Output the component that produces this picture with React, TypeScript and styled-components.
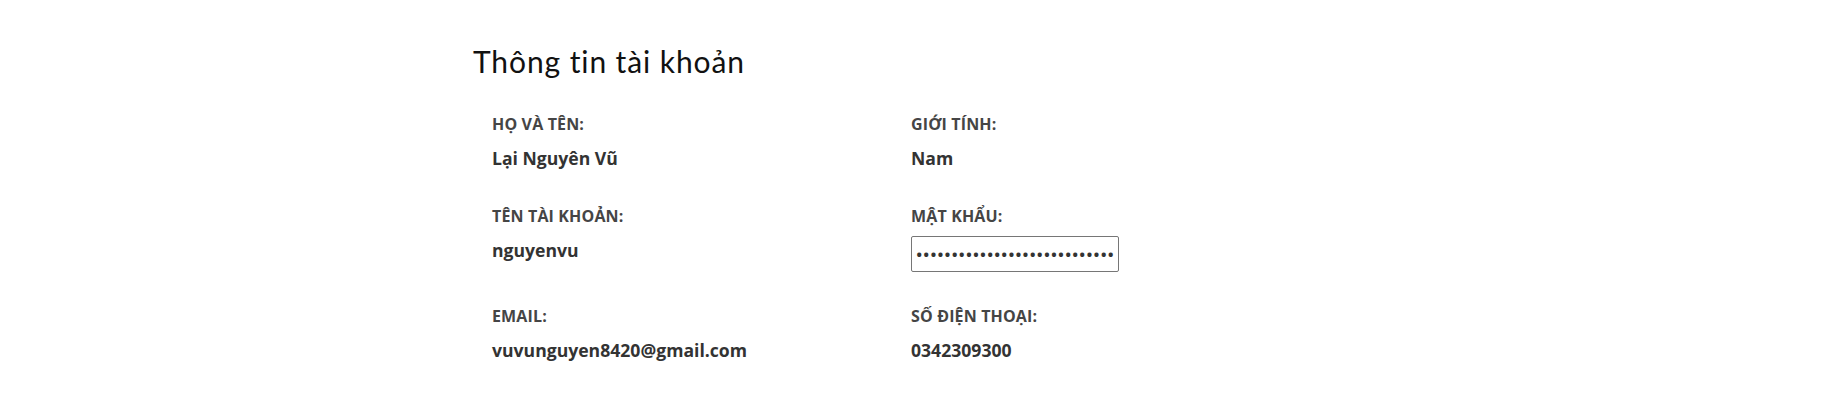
import React from "react";
import styled, { createGlobalStyle } from "styled-components";

const GlobalStyle = createGlobalStyle`
  html, body { margin: 0; padding: 0; background: #fff; }
  body { font-family: "Open Sans", "Liberation Sans", sans-serif; }
`;

const Page = styled.div`
  width: 883px;
  margin: 0 auto;
  padding-top: 43px;
`;

const Title = styled.h2`
  margin: 0;
  font-family: Lato, "Noto Sans", sans-serif;
  font-weight: 400;
  font-size: 30px;
  line-height: 36px;
  letter-spacing: 0.9px;
  color: #111;
`;

const Grid = styled.div`
  display: grid;
  grid-template-columns: 419px 419px;
  row-gap: 34px;
  margin-top: 35px;
  padding-left: 19px;
`;

const Field = styled.div`
  display: flex;
  flex-direction: column;
  align-items: flex-start;
`;

const Label = styled.div`
  font-family: "Open Sans", sans-serif;
  font-weight: 700;
  font-size: 16px;
  line-height: 20px;
  letter-spacing: 0.15px;
  color: #454545;
  text-transform: uppercase;
  margin-bottom: 10px;
`;

const Value = styled.div`
  font-family: "Open Sans", sans-serif;
  font-weight: 700;
  font-size: 17.6px;
  line-height: 28px;
  color: #333;
`;

const PasswordInput = styled.input`
  box-sizing: border-box;
  width: 208px;
  height: 36px;
  margin: 0;
  padding: 0 4px;
  border: 1px solid #767676;
  border-radius: 2px;
  background: #fff;
  font-family: "Open Sans", sans-serif;
  font-weight: 600;
  font-size: 17px;
  letter-spacing: 0.7px;
  color: #333;
  outline: none;
`;

const fields: { label: string; value?: string; password?: boolean }[] = [
  { label: "Họ và tên:", value: "Lại Nguyên Vũ" },
  { label: "Giới tính:", value: "Nam" },
  { label: "Tên tài khoản:", value: "nguyenvu" },
  { label: "Mật khẩu:", password: true },
  { label: "Email:", value: "vuvunguyen8420@gmail.com" },
  { label: "Số điện thoại:", value: "0342309300" },
];

export default function App() {
  return (
    <>
      <GlobalStyle />
      <Page>
        <Title>Thông tin tài khoản</Title>
        <Grid>
          {fields.map((f) => (
            <Field key={f.label}>
              <Label>{f.label}</Label>
              {f.password ? (
                <PasswordInput
                  type="password"
                  readOnly
                  defaultValue="$2b$10$abcdefghijklmnopqrstuvwxyz0123456789"
                />
              ) : (
                <Value>{f.value}</Value>
              )}
            </Field>
          ))}
        </Grid>
      </Page>
    </>
  );
}
